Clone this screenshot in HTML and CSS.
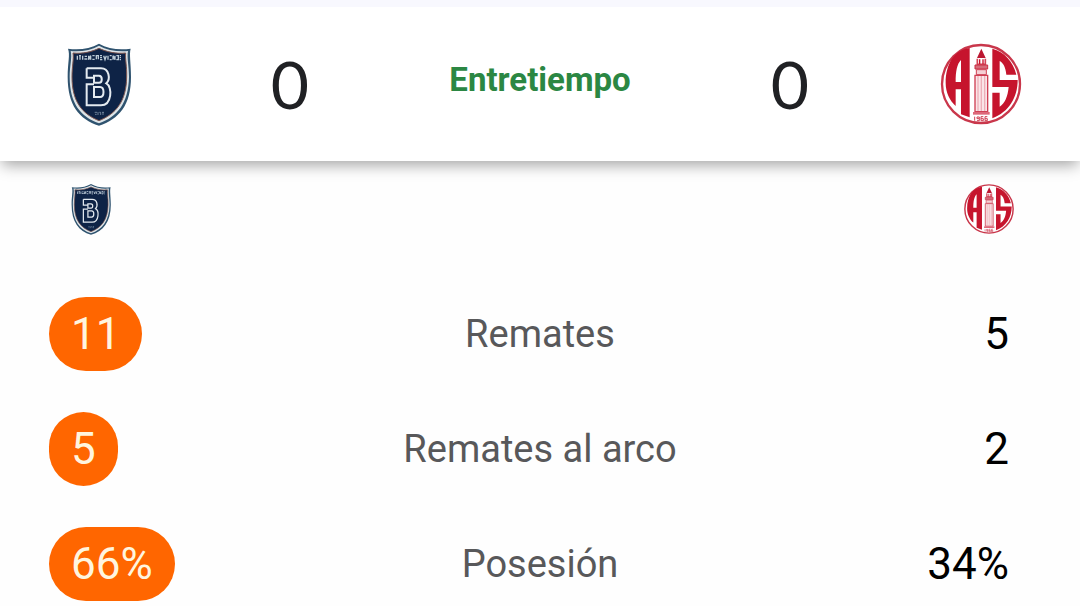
FILE: index.html
```html
<!DOCTYPE html>
<html lang="es">
<head>
<meta charset="utf-8">
<meta name="viewport" content="width=device-width, initial-scale=1">
<title>Estadísticas del partido</title>
<link rel="stylesheet" href="styles.css">
</head>
<body>
<svg class="defs" aria-hidden="true">
  <symbol id="shield" viewBox="6 21 252 252">
    <path d="M39 41C70 46 105 42 132 26C159 42 194 46 227 41C222 58 228 82 228 126C228 210 192 253 132 272C72 253 38 210 38 126C38 82 46 60 39 41Z" fill="#2f536f"/>
    <path d="M47 48C79 51 108 45 132 32C156 45 187 51 219 48C215 68 222 92 222 126C220 205 187 246 132 265C77 246 44 205 44 126C44 92 52 68 47 48Z" fill="#dde4e8"/>
    <path d="M54 54C82 57 109 51 132 40C155 51 184 57 212 54C210 71 216 94 215 126C214 200 182 237 132 257C82 237 51 200 51 126C51 94 57 71 54 54Z" fill="#0e2346" stroke="#7d5650" stroke-width="3"/>
    <path d="M67 62V74M72 62H78M75 62V74M83 62V74M89 64H96M88 72H97M101 62V74L107 62V74M112 62H119M112 73H119M124 73V62H130V73M135 62H141M135 68H141M135 74H142M146 62L150 74L154 62M159 62V74M164 62H170M164 74H170M174 74V62L180 74V62M184 62H190V74H184M194 62H198M194 68H198M194 74H198" fill="none" stroke="#bccbd7" stroke-width="4"/>
    <path d="M95 100H138C163 100 167 133 154 145C173 155 171 211 138 211H95V148H117" fill="none" stroke="#e4eaf0" stroke-width="6"/>
    <path d="M95 100V128H117M117 122H132C143 122 143 143 132 143H117ZM117 156H135C149 156 149 186 135 186H117Z" fill="none" stroke="#e4eaf0" stroke-width="6"/>
    <path d="M119 232H126M120 238H125M129 231V240M133 232H137V240M141 232H147M144 232V240" fill="none" stroke="#9aaec0" stroke-width="2"/>
  </symbol>
  <symbol id="round-crest" viewBox="26 20 252 252">
    <circle cx="152" cy="146" r="117" fill="#fff" stroke="#c9374b" stroke-width="7"/>
    <path d="M118 38V246L92 237V162H76V212C58 196 46 171 46 143C46 85 72 44 118 38ZM92 74C80 86 76 108 76 140H92Z" fill="#c6142d" fill-rule="evenodd"/>
    <path d="M186 40C222 50 248 77 258 118H228C226 96 219 83 208 77V134H262C262 186 236 230 186 249V172H208V214C224 204 232 184 235 155H186Z" fill="#c6142d"/>
    <path d="M140 68L153 40L166 68Z" fill="#bc1731"/>
    <path d="M141 70V87H165V70" fill="#fff" stroke="#d34457" stroke-width="5"/>
    <path d="M148 72V86M158 72V86" stroke="#c6142d" stroke-width="4"/>
    <path d="M134 89H172V101H134Z" fill="#d56b79" stroke="#ca2c43" stroke-width="3"/>
    <path d="M138 103H168V118H138Z" fill="#f5cfd4" stroke="#cf4054" stroke-width="3"/>
    <path d="M134 120H172V229H134Z" fill="#fae5e8" stroke="#cf4054" stroke-width="4"/>
    <path d="M143 122V227M153 122V227M163 122V227" stroke="#edb0b9" stroke-width="4"/>
    <path d="M128 230H178V238H128Z" fill="#dd6879"/>
    <path d="M133 244V256M140 245H147V250H140V245M147 250V256H140M159 244H152V256H159V250H152M171 244H164V256H171V250H164" fill="none" stroke="#cf4054" stroke-width="3"/>
  </symbol>
</svg>
<header class="scoreboard">
  <svg class="crest" role="img" aria-label="Başakşehir"><use href="#shield"/></svg>
  <span class="score">0</span>
  <strong class="status">Entretiempo</strong>
  <span class="score">0</span>
  <svg class="crest" role="img" aria-label="Antalyaspor"><use href="#round-crest"/></svg>
</header>
<main>
  <div class="teams">
    <svg class="crest-small" role="img" aria-label="Başakşehir"><use href="#shield"/></svg>
    <svg class="crest-small" role="img" aria-label="Antalyaspor"><use href="#round-crest"/></svg>
  </div>
  <table class="stats">
    <tbody>
      <tr><td class="home"><span class="pill">11</span></td><th scope="row">Remates</th><td class="away">5</td></tr>
      <tr><td class="home"><span class="pill">5</span></td><th scope="row">Remates al arco</th><td class="away">2</td></tr>
      <tr><td class="home"><span class="pill">66%</span></td><th scope="row">Posesión</th><td class="away">34%</td></tr>
    </tbody>
  </table>
</main>
</body>
</html>
```
FILE: styles.css
```css
* {
  box-sizing: border-box;
}

body {
  margin: 0;
  background: #fefefe;
  color: #000;
  font-family: Roboto, sans-serif;
  overflow-x: hidden;
}

.defs {
  position: absolute;
  width: 0;
  height: 0;
}

.scoreboard {
  display: grid;
  grid-template-columns: 198fr 184fr 316fr 184fr 198fr;
  align-items: center;
  justify-items: center;
  padding: 35px 0;
  border-top: 7px solid #f8f8fe;
  background: #fff;
  box-shadow: 0 6px 14px -2px rgba(0, 0, 0, 0.36);
}

.crest {
  width: 84px;
  height: 84px;
}

.score {
  color: #202124;
  font-family: Lato, sans-serif;
  font-size: 66px;
  line-height: 84px;
}

.status {
  padding-bottom: 8px;
  color: #2b8743;
  font-size: 33px;
  font-weight: 700;
  line-height: 40px;
}

.teams {
  display: flex;
  justify-content: space-between;
  padding: 22px 65px 41px;
}

.crest-small {
  width: 52px;
  height: 52px;
}

.stats {
  width: 100%;
  border-collapse: collapse;
  table-layout: fixed;
  font-size: 44px;
  line-height: 74px;
}

.stats td,
.stats th {
  height: 115px;
  padding: 0;
  vertical-align: middle;
}

.stats th {
  color: #58585a;
  font-size: 38px;
  font-weight: 400;
  text-align: center;
}

.stats .home {
  padding-left: 49px;
}

.stats .away {
  padding-right: 71px;
  text-align: right;
}

.pill {
  display: block;
  width: fit-content;
  padding: 0 22px;
  border-radius: 37px;
  background: #ff6600;
  color: #fff5df;
}
```
